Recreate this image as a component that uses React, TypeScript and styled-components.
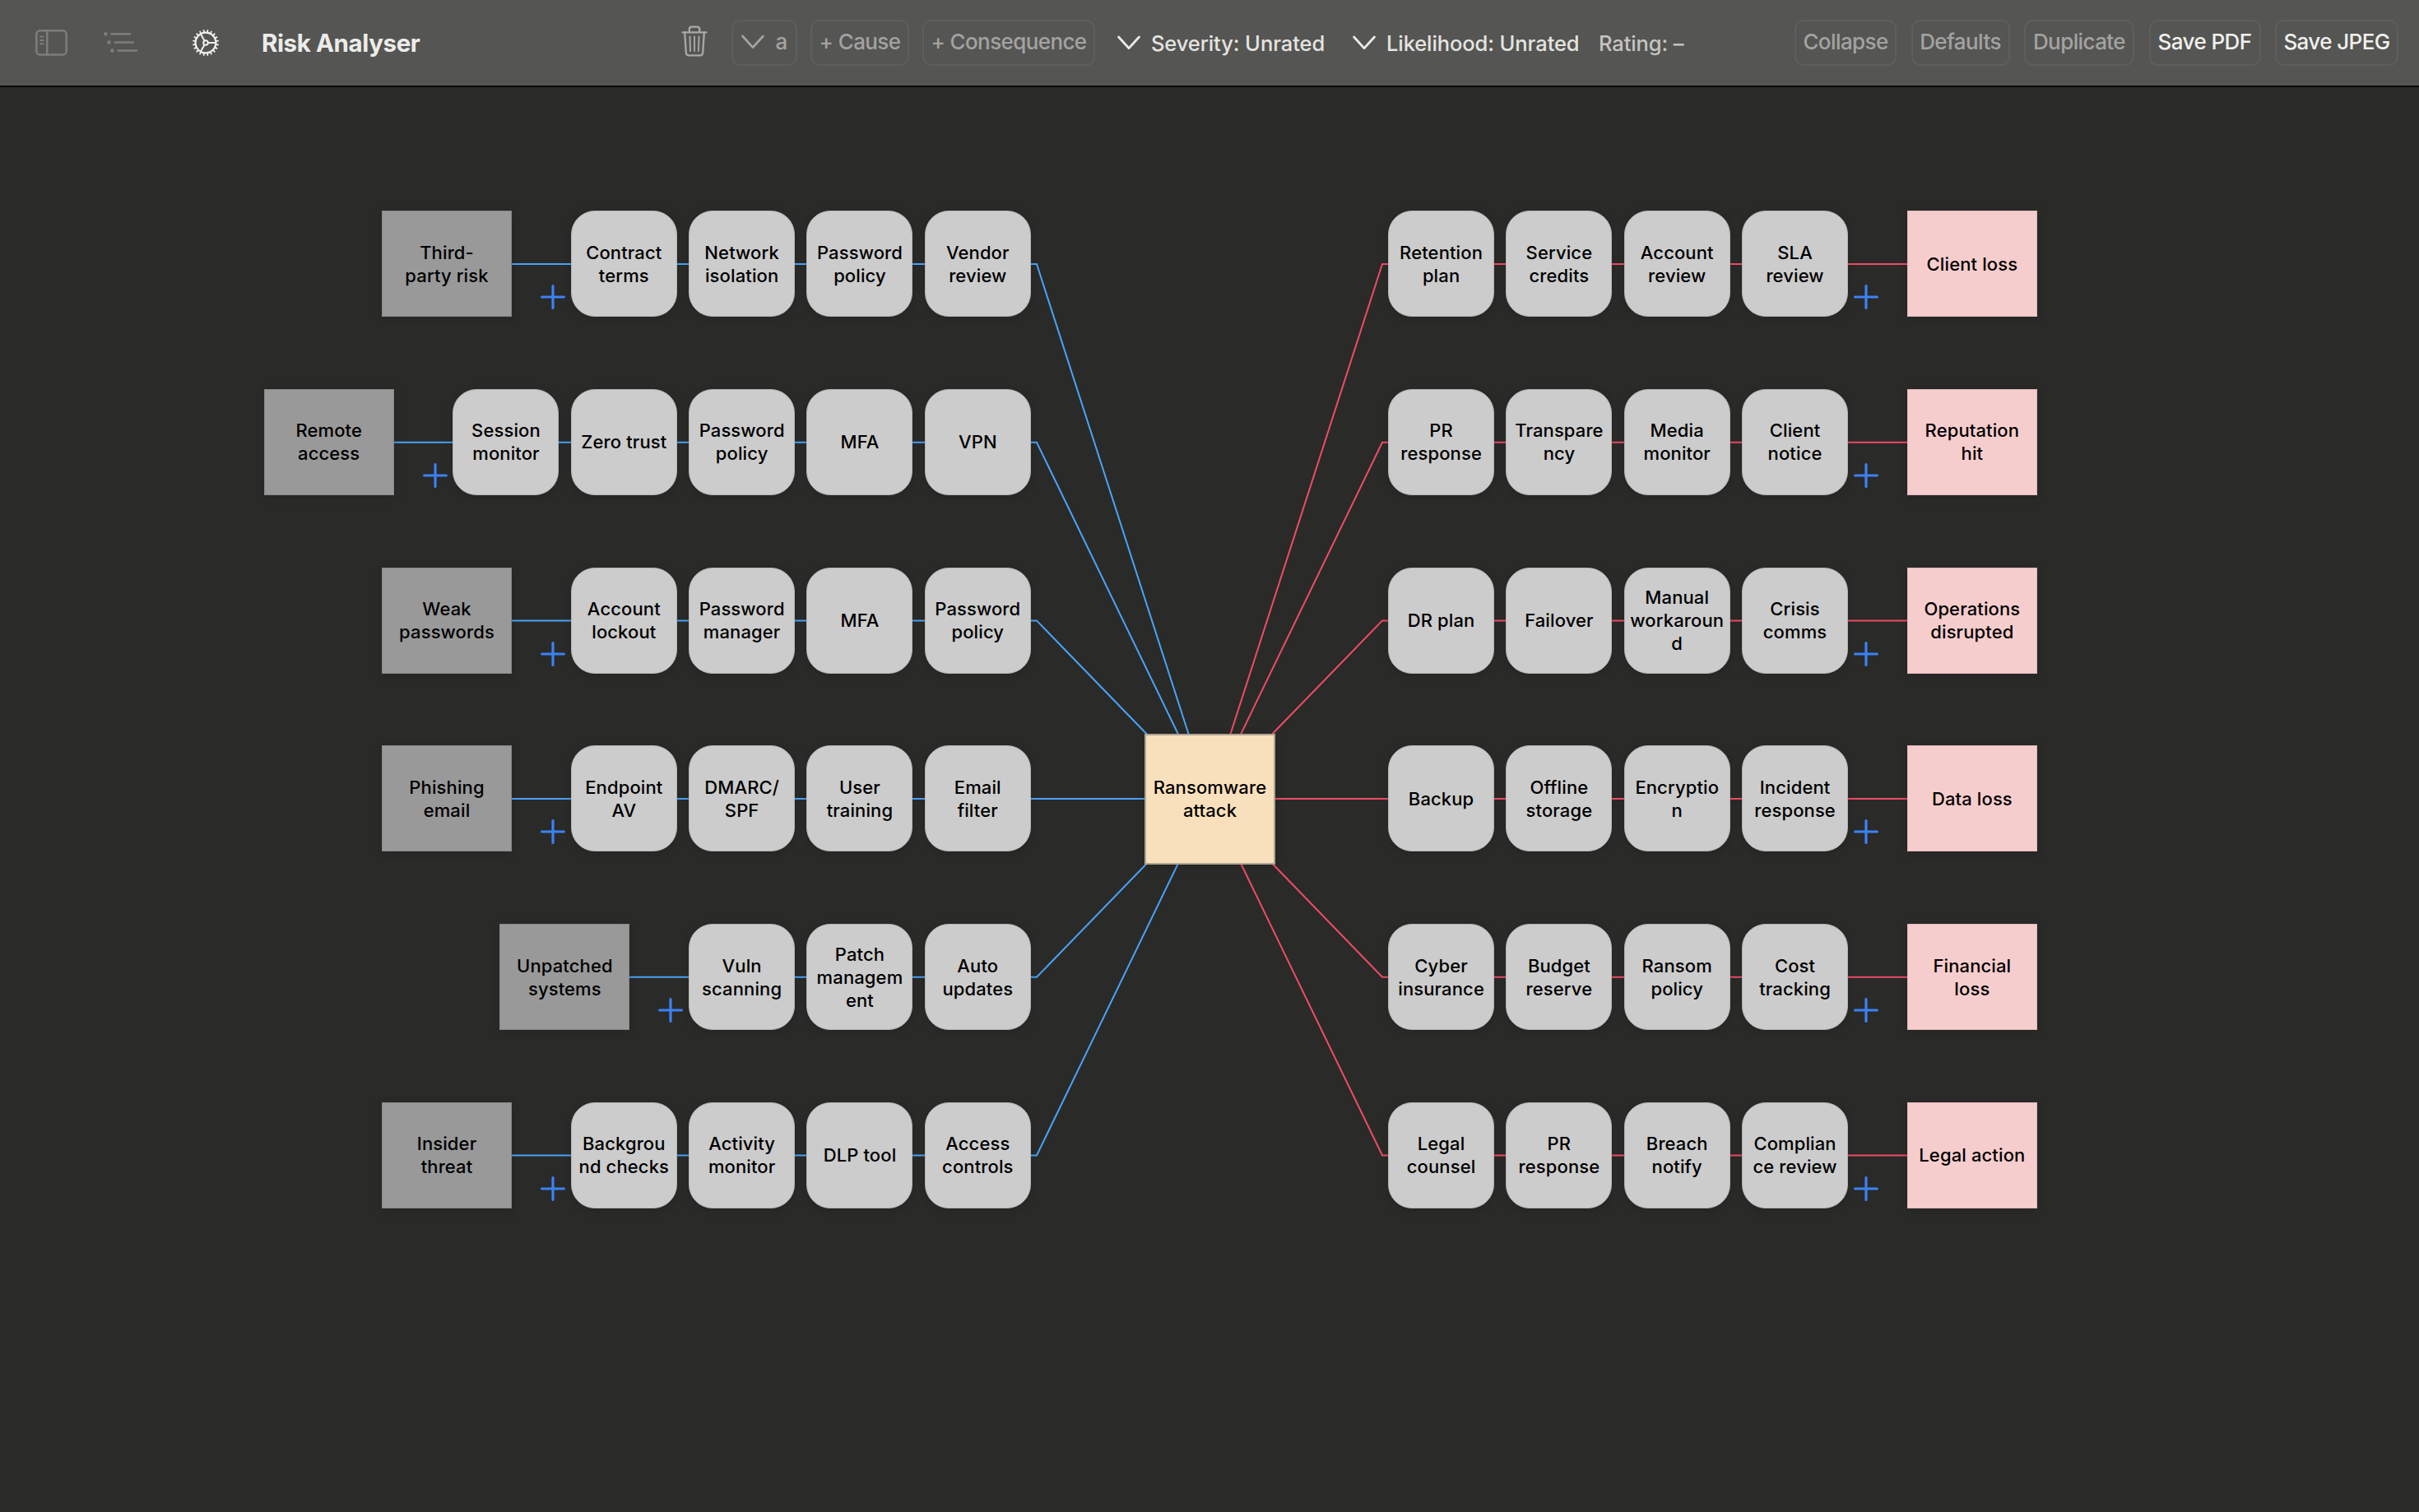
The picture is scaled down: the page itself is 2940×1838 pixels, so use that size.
import React from "react";
import styled, { createGlobalStyle } from "styled-components";

const GlobalStyle = createGlobalStyle`
  html, body { margin: 0; padding: 0; background: #2a2a28; }
  *, *::before, *::after { box-sizing: border-box; }
`;

const BLUE = "#4aa3f7";
const RED = "#ee4c67";
const NODE = 129;
const ROW_PITCH = 216.7;
const TOP = 256.3;
const CENTER_X = 1470;

const Window = styled.div`
  width: 2940px;
  height: 1838px;
  display: flex;
  flex-direction: column;
  overflow: hidden;
  background: #2a2a28;
  font-family: Inter, "Liberation Sans", sans-serif;
`;

const Toolbar = styled.header`
  height: 106px;
  flex: none;
  display: flex;
  align-items: flex-start;
  padding: 24px 25px 0 43px;
  background: #555553;
  border-bottom: 2px solid #0b0b0b;
`;

const Group = styled.div<{ $gap?: number; $w?: number; $ml?: string }>`
  display: flex;
  flex: none;
  align-items: center;
  height: 56px;
  width: ${(p) => (p.$w ? `${p.$w}px` : "auto")};
  margin-left: ${(p) => p.$ml ?? "0"};
  gap: ${(p) => p.$gap ?? 0}px;
`;

const Icon = styled.svg<{ $ml?: number }>`
  display: block;
  flex: none;
  fill: none;
  stroke-linecap: round;
  stroke-linejoin: round;
  margin-left: ${(p) => p.$ml ?? 0}px;
`;

const Title = styled.h1`
  margin: 0 0 0 52px;
  font-size: 29.5px;
  line-height: 56px;
  font-weight: 700;
  letter-spacing: -0.4px;
  color: #ececea;
  white-space: nowrap;
`;

const Button = styled.button<{ $w: number; $on?: boolean }>`
  width: ${(p) => p.$w}px;
  height: 56px;
  flex: none;
  display: flex;
  align-items: center;
  justify-content: center;
  gap: 13px;
  padding: 0 0 2px;
  border: 2px solid #5e5e5c;
  border-radius: 11px;
  background: transparent;
  font: 500 26px/50px Inter, "Liberation Sans", sans-serif;
  letter-spacing: -0.6px;
  color: ${(p) => (p.$on ? "#f0f0ee" : "#a3a3a1")};
  white-space: nowrap;
`;

const Picker = styled.div<{ $w: number }>`
  display: flex;
  align-items: center;
  gap: 13px;
  width: ${(p) => p.$w}px;
  flex: none;
`;

const Label = styled.span<{ $dim?: boolean }>`
  font-size: 25.5px;
  line-height: 52px;
  padding-top: 2px;
  font-weight: 500;
  letter-spacing: -0.1px;
  color: ${(p) => (p.$dim ? "#c4c4c0" : "#e4e4e0")};
  white-space: nowrap;
`;

const Canvas = styled.main`
  position: relative;
  flex: 1;
  display: flex;
  padding: ${TOP - 106}px 0 0 0;
`;

const Wires = styled.svg`
  position: absolute;
  left: 0;
  top: -106px;
  fill: none;
  stroke-width: 2;
`;

const Side = styled.div<{ $end?: boolean }>`
  position: relative;
  flex: none;
  display: flex;
  flex-direction: column;
  align-items: ${(p) => (p.$end ? "flex-end" : "flex-start")};
  width: ${(p) => (p.$end ? 1252.8 : 789)}px;
  gap: ${ROW_PITCH - NODE}px;
`;

const Lane = styled.div`
  display: flex;
  height: ${NODE}px;
  flex: none;
`;

const Slot = styled.div`
  width: 71.8px;
  flex: none;
  display: flex;
  align-items: flex-start;
`;

const Box = styled.div`
  flex: none;
  display: flex;
  align-items: center;
  justify-content: center;
  text-align: center;
  font-size: 22px;
  line-height: 28px;
  font-weight: 500;
  letter-spacing: 0.12px;
  color: #000;
  white-space: nowrap;
`;

const Barrier = styled(Box)`
  width: ${NODE}px;
  height: ${NODE}px;
  border-radius: 29px;
  background: #cccccc;
  border: 1px solid #b4b4b4;
  box-shadow: 0 2px 10px rgba(0, 0, 0, 0.14);
`;

const Barriers = styled.div`
  display: flex;
  gap: 14.33px;
`;

const Endpoint = styled(Box)<{ $cause?: boolean }>`
  width: 158px;
  height: ${NODE}px;
  background: ${(p) => (p.$cause ? "#999999" : "#f6cdcd")};
  border: 1px solid ${(p) => (p.$cause ? "#888888" : "#dfb9ba")};
  box-shadow: 0 2px 10px rgba(0, 0, 0, 0.14);
`;

const Hub = styled(Box)`
  position: relative;
  align-self: flex-start;
  width: 159px;
  height: 159px;
  margin: ${891.6 - TOP}px 137.1px 0 138.2px;
  background: #f9e0bc;
  border: 2px solid #b1a594;
  box-shadow: 0 2px 10px rgba(0, 0, 0, 0.14);
`;

const Plus = styled.svg<{ $x: number }>`
  margin: 90px 0 0 ${(p) => p.$x}px;
  stroke: #3b82f7;
  stroke-width: 3.2;
  stroke-linecap: round;
`;

type Row = { end: string; nodes: string[] };

const causes: Row[] = [
  { end: "Third-|party risk", nodes: ["Contract|terms", "Network|isolation", "Password|policy", "Vendor|review"] },
  { end: "Remote|access", nodes: ["Session|monitor", "Zero trust", "Password|policy", "MFA", "VPN"] },
  { end: "Weak|passwords", nodes: ["Account|lockout", "Password|manager", "MFA", "Password|policy"] },
  { end: "Phishing|email", nodes: ["Endpoint|AV", "DMARC/|SPF", "User|training", "Email|filter"] },
  { end: "Unpatched|systems", nodes: ["Vuln|scanning", "Patch|managem|ent", "Auto|updates"] },
  { end: "Insider|threat", nodes: ["Backgrou|nd checks", "Activity|monitor", "DLP tool", "Access|controls"] },
];

const consequences: Row[] = [
  { end: "Client loss", nodes: ["Retention|plan", "Service|credits", "Account|review", "SLA|review"] },
  { end: "Reputation|hit", nodes: ["PR|response", "Transpare|ncy", "Media|monitor", "Client|notice"] },
  { end: "Operations|disrupted", nodes: ["DR plan", "Failover", "Manual|workaroun|d", "Crisis|comms"] },
  { end: "Data loss", nodes: ["Backup", "Offline|storage", "Encryptio|n", "Incident|response"] },
  { end: "Financial|loss", nodes: ["Cyber|insurance", "Budget|reserve", "Ransom|policy", "Cost|tracking"] },
  { end: "Legal action", nodes: ["Legal|counsel", "PR|response", "Breach|notify", "Complian|ce review"] },
];

const Lines = ({ text }: { text: string }) => (
  <span>
    {text.split("|").map((t, i) => (
      <React.Fragment key={i}>
        {i > 0 && <br />}
        {t}
      </React.Fragment>
    ))}
  </span>
);

const AddMark = ({ x }: { x: number }) => (
  <Plus $x={x} width="30" height="30" viewBox="0 0 30 30">
    <path d="M15 1.6V28.4M1.6 15H28.4" />
  </Plus>
);

const Chevron = ({ color }: { color: string }) => (
  <Icon width="28" height="18" viewBox="0 0 28 18" stroke={color} strokeWidth="2.8">
    <path d="M1.6 2L14 15.6L26.4 2" />
  </Icon>
);

const Gear = () => {
  const teeth = Array.from({ length: 20 }, (_, i) => {
    const a = ((i * 18 + 9) * Math.PI) / 180;
    const c = Math.cos(a);
    const s = Math.sin(a);
    return `M${16 + 13 * c} ${16 + 13 * s}L${16 + 15.2 * c} ${16 + 15.2 * s}`;
  }).join("");
  return (
    <Icon $ml={65} width="32" height="32" viewBox="0 0 32 32" stroke="#efefed" strokeWidth="2.3">
      <circle cx="16" cy="16" r="12.4" />
      <circle cx="16" cy="16" r="2.8" strokeWidth="2" />
      <path d={teeth} strokeWidth="1.8" />
      <path d="M19 16H28M14.5 13.4L10 5.4M14.5 18.6L10 26.6" strokeWidth="2" />
    </Icon>
  );
};

const wirePaths = (rows: Row[], side: -1 | 1) =>
  rows.map((r, i) => {
    const y = 321 + i * ROW_PITCH;
    const far = CENTER_X + side * (283 + r.nodes.length * 143.33);
    return `M${far} ${y}H${CENTER_X + side * 210}L${CENTER_X} 971`;
  });

export default function App() {
  return (
    <>
      <GlobalStyle />
      <Window>
        <Toolbar>
          <Group $w={785}>
            <Icon width="39" height="32" viewBox="0 0 39 32" stroke="#7e7e7c" strokeWidth="2.5">
              <rect x="1.3" y="1.3" width="36.4" height="29.2" rx="4.5" />
              <path d="M14.3 1.5V30.5" />
              <path d="M6 8.5H9.8M6 13H9.8M6 17.3H9.8" strokeWidth="1.9" />
            </Icon>
            <Icon $ml={44} width="43" height="26" viewBox="0 0 43 26" stroke="#7e7e7c" strokeWidth="2.5">
              <path d="M9.5 2.3H32M13.8 12.5H36M17.6 22.5H40" />
              <g fill="#7e7e7c" stroke="none">
                <circle cx="2.4" cy="2.3" r="2.2" />
                <circle cx="6.4" cy="12.5" r="2.2" />
                <circle cx="10.4" cy="22.5" r="2.2" />
              </g>
            </Icon>
            <Gear />
            <Title>Risk Analyser</Title>
          </Group>
          <Group>
            <Icon width="32" height="42" viewBox="0 0 32 42" stroke="#a9a9a7" strokeWidth="2.3">
              <path d="M1.5 8.3H30.5M9.8 8V4.5Q9.8 1.6 12.6 1.6H19.4Q22.2 1.6 22.2 4.5V8" />
              <path d="M4.2 8.5L5.8 33Q6 36.4 9.2 36.4H22.8Q26 36.4 26.2 33L27.8 8.5" />
              <path d="M10.5 13.5L11 31M16 13.5V31M21.5 13.5L21 31" strokeWidth="1.9" />
            </Icon>
            <Group $ml="29px" $gap={16}>
              <Button $w={80}><Chevron color="#a3a3a1" />a</Button>
              <Button $w={120}>+ Cause</Button>
              <Button $w={210}>+ Consequence</Button>
            </Group>
            <Group $ml="27px">
              <Picker $w={286}><Chevron color="#ececea" /><Label>Severity: Unrated</Label></Picker>
              <Picker $w={299}><Chevron color="#ececea" /><Label>Likelihood: Unrated</Label></Picker>
              <Label $dim>Rating: –</Label>
            </Group>
          </Group>
          <Group $ml="auto" $gap={17.5}>
            <Button $w={124}>Collapse</Button>
            <Button $w={120}>Defaults</Button>
            <Button $w={134}>Duplicate</Button>
            <Button $w={136} $on>Save PDF</Button>
            <Button $w={150} $on>Save JPEG</Button>
          </Group>
        </Toolbar>
        <Canvas>
          <Wires width="2940" height="1838" viewBox="0 0 2940 1838">
            {wirePaths(causes, -1).map((d, i) => <path key={i} d={d} stroke={BLUE} />)}
            {wirePaths(consequences, 1).map((d, i) => <path key={i} d={d} stroke={RED} />)}
          </Wires>
          <Side $end>
            {causes.map((r) => (
              <Lane key={r.end}>
                <Endpoint $cause><Lines text={r.end} /></Endpoint>
                <Slot><AddMark x={35} /></Slot>
                <Barriers>
                  {r.nodes.map((n, i) => <Barrier key={i}><Lines text={n} /></Barrier>)}
                </Barriers>
              </Lane>
            ))}
          </Side>
          <Hub><Lines text="Ransomware|attack" /></Hub>
          <Side>
            {consequences.map((r) => (
              <Lane key={r.end}>
                <Barriers>
                  {r.nodes.map((n, i) => <Barrier key={i}><Lines text={n} /></Barrier>)}
                </Barriers>
                <Slot><AddMark x={7} /></Slot>
                <Endpoint><Lines text={r.end} /></Endpoint>
              </Lane>
            ))}
          </Side>
        </Canvas>
      </Window>
    </>
  );
}
